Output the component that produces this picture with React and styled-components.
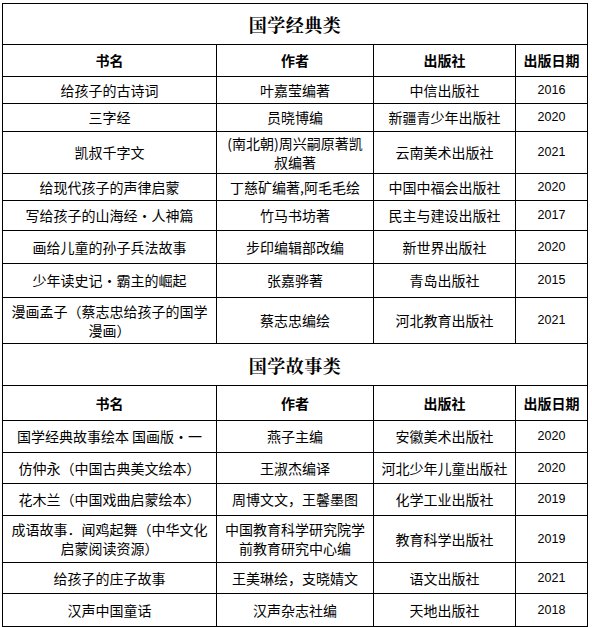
import React from "react";
import styled, { createGlobalStyle } from "styled-components";

const GlobalStyle = createGlobalStyle`
  html, body { margin: 0; padding: 0; background: #fff; }
  body { font-family: "Noto Sans CJK SC", "Liberation Sans", sans-serif; color: #000; }
`;

const Page = styled.div`
  padding: 3px 0 0 2px;
`;

const Table = styled.div`
  width: 586px;
  box-sizing: border-box;
  border-top: 1px solid #000;
  border-left: 1px solid #000;
  display: flex;
  flex-direction: column;
`;

const TitleRow = styled.div`
  height: ${(p) => p.$h}px;
  box-sizing: border-box;
  border-right: 1px solid #000;
  border-bottom: 1px solid #000;
  display: flex;
  align-items: center;
  justify-content: center;
  font-family: "Noto Serif CJK SC", "Noto Sans CJK SC", serif;
  font-weight: 700;
  font-size: 18px;
  letter-spacing: 0.5px;
`;

const Row = styled.div`
  display: grid;
  grid-template-columns: 214px 157px 142px 72px;
  height: ${(p) => p.$h}px;
`;

const Cell = styled.div`
  box-sizing: border-box;
  border-right: 1px solid #000;
  border-bottom: 1px solid #000;
  display: flex;
  align-items: center;
  justify-content: center;
  text-align: center;
  padding: 0 3px;
  font-size: 14px;
  line-height: 19px;
  font-weight: ${(p) => (p.$head ? 700 : 400)};
  white-space: nowrap;
`;

const YearCell = styled(Cell)`
  font-family: "Liberation Sans", "Noto Sans CJK SC", sans-serif;
  font-size: 12.5px;
`;

const sections = [
  {
    title: "国学经典类",
    titleH: 41,
    headH: 32,
    rows: [
      ["给孩子的古诗词", "叶嘉莹编著", "中信出版社", "2016", 27],
      ["三字经", "员晓博编", "新疆青少年出版社", "2020", 28],
      ["凯叔千字文", ["(南北朝)周兴嗣原著凯", "叔编著"], "云南美术出版社", "2021", 42],
      ["给现代孩子的声律启蒙", "丁慈矿编著,阿毛毛绘", "中国中福会出版社", "2020", 27],
      ["写给孩子的山海经·人神篇", "竹马书坊著", "民主与建设出版社", "2017", 30],
      ["画给儿童的孙子兵法故事", "步印编辑部改编", "新世界出版社", "2020", 33],
      ["少年读史记·霸主的崛起", "张嘉骅著", "青岛出版社", "2015", 34],
      [["漫画孟子（蔡志忠给孩子的国学", "漫画）"], "蔡志忠编绘", "河北教育出版社", "2021", 46],
    ],
  },
  {
    title: "国学故事类",
    titleH: 42,
    headH: 35,
    rows: [
      ["国学经典故事绘本 国画版·一", "燕子主编", "安徽美术出版社", "2020", 32],
      ["仿仲永（中国古典美文绘本）", "王淑杰编译", "河北少年儿童出版社", "2020", 31],
      ["花木兰（中国戏曲启蒙绘本）", "周博文文，王馨墨图", "化学工业出版社", "2019", 32],
      [
        ["成语故事．闻鸡起舞（中华文化", "启蒙阅读资源）"],
        ["中国教育科学研究院学", "前教育研究中心编"],
        "教育科学出版社",
        "2019",
        47,
      ],
      ["给孩子的庄子故事", "王美琳绘，支晓婧文", "语文出版社", "2021", 31],
      ["汉声中国童话", "汉声杂志社编", "天地出版社", "2018", 33],
    ],
  },
];

const Text = ({ value }) =>
  Array.isArray(value) ? (
    <span>
      {value[0]}
      <br />
      {value[1]}
    </span>
  ) : (
    value
  );

export default function App() {
  return (
    <Page>
      <GlobalStyle />
      <Table>
        {sections.map((s) => (
          <React.Fragment key={s.title}>
            <TitleRow $h={s.titleH}>{s.title}</TitleRow>
            <Row $h={s.headH}>
              <Cell $head>书名</Cell>
              <Cell $head>作者</Cell>
              <Cell $head>出版社</Cell>
              <Cell $head>出版日期</Cell>
            </Row>
            {s.rows.map((r, i) => (
              <Row key={i} $h={r[4]}>
                <Cell>
                  <Text value={r[0]} />
                </Cell>
                <Cell>
                  <Text value={r[1]} />
                </Cell>
                <Cell>{r[2]}</Cell>
                <YearCell>{r[3]}</YearCell>
              </Row>
            ))}
          </React.Fragment>
        ))}
      </Table>
    </Page>
  );
}
